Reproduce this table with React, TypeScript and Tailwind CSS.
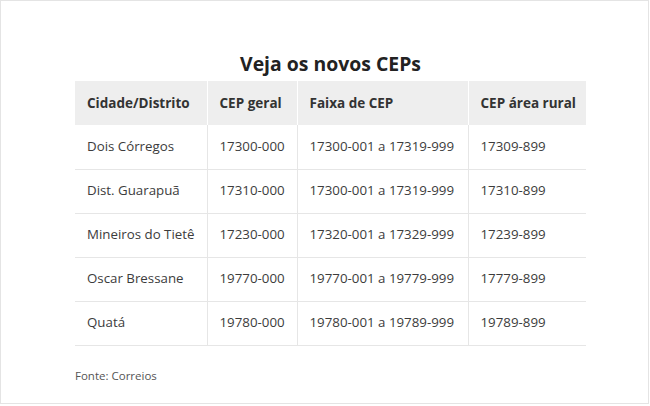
const rows = [
  ["Dois Córregos", "17300-000", "17300-001 a 17319-999", "17309-899"],
  ["Dist. Guarapuã", "17310-000", "17300-001 a 17319-999", "17310-899"],
  ["Mineiros do Tietê", "17230-000", "17320-001 a 17329-999", "17239-899"],
  ["Oscar Bressane", "19770-000", "19770-001 a 19779-999", "17779-899"],
  ["Quatá", "19780-000", "19780-001 a 19789-999", "19789-899"],
];

const headers = ["Cidade/Distrito", "CEP geral", "Faixa de CEP", "CEP área rural"];
const widths = ["w-[132px]", "w-[90px]", "w-[171px]", "w-[118px]"];

export default function App() {
  return (
    <div className="h-[406px] w-[650px] bg-white font-['Open_Sans',sans-serif]">
      <div className="flex h-[404px] w-[649px] flex-col border border-[#e4e4e4] pl-[74px] pt-[49px]">
        <div className="w-[511px]">
          <h2 className="mb-[3px] text-center text-[19.4px] font-bold leading-7 text-[#222]">
            Veja os novos CEPs
          </h2>
          <table className="w-[511px] table-fixed border-collapse whitespace-nowrap text-[13.3px] text-[#3c3c3c]">
            <thead>
              <tr className="h-[44px] bg-[#eeeeee]">
                {headers.map((h, i) => (
                  <th
                    key={h}
                    className={`${widths[i]} border-l border-white px-3 text-left text-[13.5px] font-bold text-[#333] first:border-l-0`}
                  >
                    {h}
                  </th>
                ))}
              </tr>
            </thead>
            <tbody>
              {rows.map((r) => (
                <tr key={r[0]} className="h-[44px] border-b border-[#e6e6e6]">
                  {r.map((c, i) => (
                    <td key={i} className="border-l border-[#e6e6e6] px-3 first:border-l-0">
                      {c}
                    </td>
                  ))}
                </tr>
              ))}
            </tbody>
          </table>
          <p className="mt-[22px] text-[11.5px] leading-4 text-[#555]">Fonte: Correios</p>
        </div>
      </div>
    </div>
  );
}
